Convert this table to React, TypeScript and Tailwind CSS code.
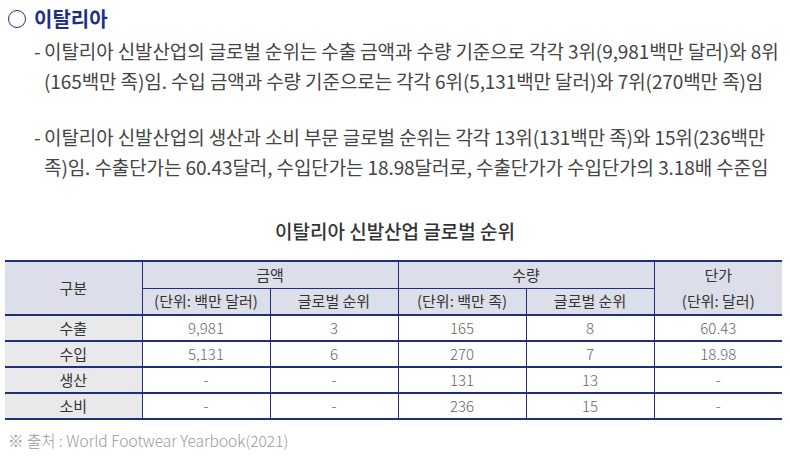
const rows = [
  { label: '수출', amount: '9,981', amountRank: '3', qty: '165', qtyRank: '8', price: '60.43' },
  { label: '수입', amount: '5,131', amountRank: '6', qty: '270', qtyRank: '7', price: '18.98' },
  { label: '생산', amount: '-', amountRank: '-', qty: '131', qtyRank: '13', price: '-' },
  { label: '소비', amount: '-', amountRank: '-', qty: '236', qtyRank: '15', price: '-' },
];

export default function App() {
  return (
    <div
      className="w-[790px] h-[463px] bg-white overflow-hidden text-[#444]"
      style={{ fontFamily: '"Noto Sans CJK KR", "Noto Sans", sans-serif' }}
    >
      {/* Heading */}
      <div className="flex items-center gap-[8px] pl-[8px] pt-[8px]">
        <span className="w-[18px] h-[18px] rounded-full border-[1.5px] border-[#1f2f86]" />
        <h2 className="text-[20px] leading-[22px] font-bold text-[#1f2f86]">이탈리아</h2>
      </div>

      {/* Body */}
      <div className="pl-[34px] mt-[6px] text-[19px] leading-[30px] tracking-[-0.1px] whitespace-nowrap">
        <p className="flex">
          <span className="w-[10px] shrink-0">-</span>
          <span>
            이탈리아 신발산업의 글로벌 순위는 수출 금액과 수량 기준으로 각각 3위(9,981백만 달러)와 8위
            <br />
            (165백만 족)임. 수입 금액과 수량 기준으로는 각각 6위(5,131백만 달러)와 7위(270백만 족)임
          </span>
        </p>
        <p className="flex mt-[26px]">
          <span className="w-[10px] shrink-0">-</span>
          <span>
            이탈리아 신발산업의 생산과 소비 부문 글로벌 순위는 각각 13위(131백만 족)와 15위(236백만
            <br />
            족)임. 수출단가는 60.43달러, 수입단가는 18.98달러로, 수출단가가 수입단가의 3.18배 수준임
          </span>
        </p>
      </div>

      {/* Table title */}
      <div className="mt-[37px] text-center text-[19px] leading-[24px] font-medium text-[#333]">
        이탈리아 신발산업 글로벌 순위
      </div>

      {/* Table */}
      <table className="ml-[5px] mt-[17px] w-[777px] border-collapse table-fixed text-[15px] text-center">
        <colgroup>
          <col className="w-[137px]" />
          <col className="w-[128px]" />
          <col className="w-[128px]" />
          <col className="w-[128px]" />
          <col className="w-[128px]" />
          <col className="w-[128px]" />
        </colgroup>
        <thead className="bg-[#dcdee9] text-[#333]">
          <tr className="h-[27px] border-t-2 border-[#1f2f7c]">
            <th rowSpan={2} className="font-normal border-b-2 border-r-[1.5px] border-[#1f2f7c]">구분</th>
            <th colSpan={2} className="font-normal border-b border-r-[1.5px] border-[#1f2f7c]">금액</th>
            <th colSpan={2} className="font-normal border-b border-r-[1.5px] border-[#1f2f7c]">수량</th>
            <th className="font-normal">단가</th>
          </tr>
          <tr className="h-[27px] border-b-2 border-[#1f2f7c]">
            <th className="font-normal border-r-[1.5px] border-[#1f2f7c]">(단위: 백만 달러)</th>
            <th className="font-normal border-r-[1.5px] border-[#1f2f7c]">글로벌 순위</th>
            <th className="font-normal border-r-[1.5px] border-[#1f2f7c]">(단위: 백만 족)</th>
            <th className="font-normal border-r-[1.5px] border-[#1f2f7c]">글로벌 순위</th>
            <th className="font-normal">(단위: 달러)</th>
          </tr>
        </thead>
        <tbody className="text-[#666] font-light">
          {rows.map((r) => (
            <tr key={r.label} className="h-[26px] border-b-2 border-[#1f2f7c]">
              <td className="bg-[#e9e9ec] text-[#333] font-normal border-r-[1.5px] border-[#1f2f7c]">{r.label}</td>
              <td className="border-r-[1.5px] border-[#1f2f7c]">{r.amount}</td>
              <td className="border-r-[1.5px] border-[#1f2f7c]">{r.amountRank}</td>
              <td className="border-r-[1.5px] border-[#1f2f7c]">{r.qty}</td>
              <td className="border-r-[1.5px] border-[#1f2f7c]">{r.qtyRank}</td>
              <td>{r.price}</td>
            </tr>
          ))}
        </tbody>
      </table>

      {/* Source */}
      <div className="mt-[9px] pl-[8px] text-[15.5px] leading-[22px] font-light text-[#999]">
        ※ 출처 : World Footwear Yearbook(2021)
      </div>
    </div>
  );
}
